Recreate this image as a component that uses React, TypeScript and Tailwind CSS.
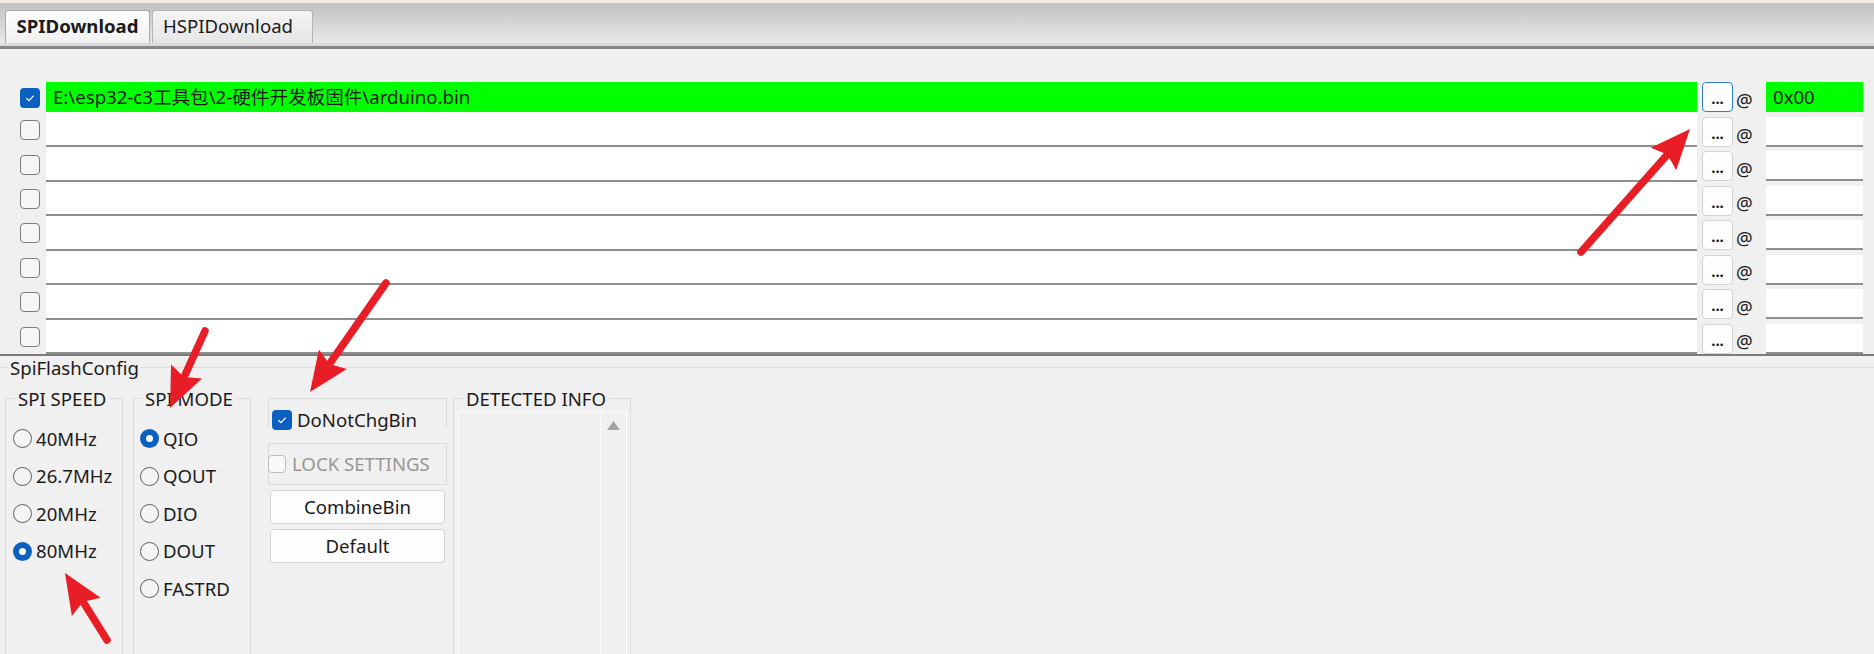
import React from 'react';

const rows = [0, 1, 2, 3, 4, 5, 6, 7];
const speeds = ['40MHz', '26.7MHz', '20MHz', '80MHz'];
const modes = ['QIO', 'QOUT', 'DIO', 'DOUT', 'FASTRD'];

// red annotation arrows: tail -> tip
const arrows = [
  { x1: 1581, y1: 252, x2: 1690, y2: 129 },
  { x1: 386, y1: 283, x2: 310, y2: 392 },
  { x1: 205, y1: 331, x2: 170, y2: 408 },
  { x1: 107, y1: 640, x2: 65, y2: 573 },
];

function Check({ checked, disabled, small }: { checked?: boolean; disabled?: boolean; small?: boolean }) {
  const size = small ? 'h-[18px] w-[18px]' : 'h-[20px] w-[20px]';
  if (checked) {
    return (
      <span className={`flex shrink-0 items-center justify-center rounded-[4px] bg-[#0a5fc1] ${size}`}>
        <svg width="12" height="12" viewBox="0 0 12 12">
          <path d="M2.4 6.3 L5 8.7 L9.7 3.6" fill="none" stroke="#fff" strokeWidth="1.2" />
        </svg>
      </span>
    );
  }
  return (
    <span
      className={`block shrink-0 rounded-[4px] border-[1.5px] ${size} ${
        disabled ? 'border-[#bcbcbc] bg-[#f9f9f9]' : 'border-[#7c7c7c] bg-[#f6f6f6]'
      }`}
    />
  );
}

function Radio({ checked }: { checked?: boolean }) {
  if (checked) {
    return (
      <span className="flex h-[19px] w-[19px] shrink-0 items-center justify-center rounded-full bg-[#0a5fc1]">
        <span className="h-[7px] w-[7px] rounded-full bg-white" />
      </span>
    );
  }
  return <span className="h-[19px] w-[19px] shrink-0 rounded-full border-[1.5px] border-[#5e5e5e] bg-[#f5f5f5]" />;
}

function Arrow({ x1, y1, x2, y2 }: { x1: number; y1: number; x2: number; y2: number }) {
  const dx = x2 - x1;
  const dy = y2 - y1;
  const len = Math.hypot(dx, dy);
  const ux = dx / len;
  const uy = dy / len;
  const hl = 40;
  const hw = 17;
  const bx = x2 - ux * hl;
  const by = y2 - uy * hl;
  const pts = `${x2},${y2} ${bx - uy * hw},${by + ux * hw} ${bx + ux * 6},${by + uy * 6} ${bx + uy * hw},${by - ux * hw}`;
  return (
    <g>
      <line x1={x1} y1={y1} x2={bx + ux * 4} y2={by + uy * 4} stroke="#e81d25" strokeWidth="7.5" strokeLinecap="round" />
      <polygon points={pts} fill="#e81d25" />
    </g>
  );
}

export default function App() {
  return (
    <div className="relative h-[654px] w-[1874px] overflow-hidden bg-[#f0f0f0] font-['Noto_Sans','Noto_Sans_CJK_SC',sans-serif] text-[18.6px] leading-[22px] text-[#1b1b1b]">
      {/* tab strip */}
      <div className="h-[3px] bg-[#f5ece9]" />
      <div className="flex h-[40px] items-end bg-gradient-to-b from-[#c1c1c1] to-[#e9e9e9] pl-[5px]">
        <div className="flex h-[33px] w-[145px] items-center justify-center rounded-t-[3px] border border-b-0 border-[#a9a9a9] bg-gradient-to-b from-[#fdfdfd] to-[#f1f1f1] pb-[3px] font-bold">
          SPIDownload
        </div>
        <div className="ml-[2px] flex h-[33px] w-[161px] items-center rounded-t-[3px] border border-b-0 border-[#b5b5b5] bg-gradient-to-b from-[#f4f4f4] to-[#e6e6e6] pb-[3px] pl-[10px]">
          HSPIDownload
        </div>
      </div>
      <div className="h-[3px] bg-[#dadada]" />
      <div className="h-[3px] bg-[#878787]" />

      {/* file rows */}
      <div className="pt-[33px]">
        {rows.map((i) => (
          <div key={i} className={`flex ${i === 0 ? 'h-[31px]' : 'h-[34.43px]'}`}>
            <div className="flex w-[46px] shrink-0 items-center pl-[20px]">
              <Check checked={i === 0} />
            </div>
            {i === 0 ? (
              <div className="flex-1 bg-white">
                <div className="flex h-[30px] items-center bg-[#00ff00] pl-[7px]">
                  E:\esp32-c3工具包\2-硬件开发板固件\arduino.bin
                </div>
              </div>
            ) : (
              <div className="flex-1 border-b-2 border-[#8f8f8f] bg-white" />
            )}
            <div className={`flex ${i === 0 ? '' : 'pt-[4px]'}`}>
              <div
                className={`ml-[5px] flex h-[30px] w-[31px] items-end justify-center rounded-[4px] bg-[#fdfdfd] pb-[5px] text-[15px] leading-[15px] font-bold ${
                  i === 0 ? 'border-[1.5px] border-[#2f7fd0]' : 'border border-[#d3d3d3]'
                }`}
              >
                ...
              </div>
              <div className="flex h-[30px] w-[33px] items-center pl-[3px] pt-[5px]">@</div>
              <div
                className={`flex h-[30px] w-[97px] items-center pl-[7px] ${
                  i === 0 ? 'bg-[#00ff00]' : 'border-b-2 border-[#8f8f8f] bg-white'
                }`}
              >
                {i === 0 ? '0x00' : ''}
              </div>
            </div>
            <div className="w-[11px]" />
          </div>
        ))}
      </div>

      {/* config panel */}
      <div className="border-t-2 border-[#7b7b7b]">
        <fieldset className="mt-[1px] border-t border-[#dcdcdc]">
          <legend className="ml-[8px] px-[2px]">SpiFlashConfig</legend>
          <div className="flex items-start">
            <fieldset className="ml-[5px] mt-[9px] h-[280px] w-[118px] border border-[#dcdcdc]">
              <legend className="ml-[9px] px-[3px]">SPI SPEED</legend>
              <div className="flex flex-col pl-[7px] pt-[10px]">
                {speeds.map((s, i) => (
                  <div key={s} className="flex h-[37.5px] items-center gap-[4px]">
                    <Radio checked={i === 3} />
                    <span>{s}</span>
                  </div>
                ))}
              </div>
            </fieldset>

            <fieldset className="ml-[10px] mt-[9px] h-[280px] w-[118px] border border-[#dcdcdc]">
              <legend className="ml-[8px] px-[3px]">SPI MODE</legend>
              <div className="flex flex-col pl-[6px] pt-[10px]">
                {modes.map((m, i) => (
                  <div key={m} className="flex h-[37.5px] items-center gap-[4px]">
                    <Radio checked={i === 0} />
                    <span>{m}</span>
                  </div>
                ))}
              </div>
            </fieldset>

            <div className="ml-[17px] mt-[19px] flex w-[179px] flex-col">
              <div className="flex h-[30px] items-start border border-b-0 border-[#dcdcdc] pl-[3px] pt-[11px]">
                <Check checked />
                <span className="ml-[5px] -mt-[1px]">DoNotChgBin</span>
              </div>
              <div className="mt-[15px] flex h-[42px] items-center border border-[#dcdcdc]">
                <span className="-ml-[1px]">
                  <Check disabled small />
                </span>
                <span className="ml-[6px] text-[#979797]">LOCK SETTINGS</span>
              </div>
              <div className="mx-[2px] mt-[5px] flex h-[34px] items-center justify-center rounded-[4px] border border-[#d3d3d3] bg-[#fdfdfd]">
                CombineBin
              </div>
              <div className="mx-[2px] mt-[5px] flex h-[34px] items-center justify-center rounded-[4px] border border-[#d3d3d3] bg-[#fdfdfd]">
                Default
              </div>
            </div>

            <fieldset className="ml-[6px] mt-[9px] h-[280px] w-[178px] border border-[#dcdcdc]">
              <legend className="ml-[9px] px-[3px]">DETECTED INFO</legend>
              <div className="ml-[4px] mr-[3px] mt-[1px] flex h-[260px] border border-[#fbfbfb]">
                <div className="flex-1" />
                <div className="flex w-[26px] justify-center border-l border-[#fbfbfb] pt-[9px]">
                  <svg width="13" height="9" viewBox="0 0 13 9">
                    <polygon points="6.5,0 13,9 0,9" fill="#a3a3a3" />
                  </svg>
                </div>
              </div>
            </fieldset>
          </div>
        </fieldset>
      </div>

      {/* annotation arrows */}
      <svg className="pointer-events-none absolute left-0 top-0" width="1874" height="654">
        {arrows.map((a, i) => (
          <Arrow key={i} {...a} />
        ))}
      </svg>
    </div>
  );
}
